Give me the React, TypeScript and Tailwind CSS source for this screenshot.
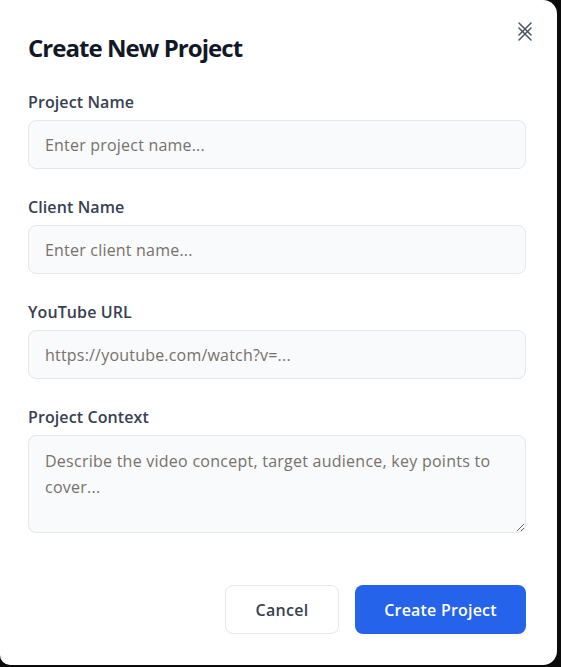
import React from 'react';

const fields = [
  { label: 'Project Name', placeholder: 'Enter project name...' },
  { label: 'Client Name', placeholder: 'Enter client name...' },
  { label: 'YouTube URL', placeholder: 'https://youtube.com/watch?v=...' },
];

const CloseIcon = () => (
  <svg width="16" height="22" viewBox="0 0 16 22" fill="none" stroke="#4b5563" strokeWidth="1.5" strokeLinecap="round">
    <path d="M2 2 L14 14 M14 2 L2 14" />
    <path d="M2 7 L14 19 M14 7 L2 19" />
  </svg>
);

export default function App() {
  return (
    <div
      className="w-[561px] h-[667px] bg-[#0b0b0b] overflow-hidden"
      style={{ fontFamily: '"Open Sans", "Noto Sans", sans-serif' }}
    >
      <div className="relative w-[557px] h-[665px] bg-white rounded-r-[14px] rounded-bl-[10px] pl-7 pr-[31px] pt-8">
        <button className="absolute top-[21px] right-[24px]">
          <CloseIcon />
        </button>
        <h2 className="text-2xl font-bold leading-8 text-[#111827] mb-6 tracking-[-0.95px]">Create New Project</h2>
        <div className="flex flex-col gap-6">
          {fields.map((f) => (
            <div key={f.label}>
              <label className="block text-base leading-7 font-semibold text-[#374151] mb-1 tracking-[0.1px]">{f.label}</label>
              <input
                className="block w-full h-[49px] rounded-lg border border-[#e5e7eb] bg-[#f9fafb] px-4 text-base text-[#111827] placeholder:text-[#78716c] outline-none tracking-[0.2px]"
                placeholder={f.placeholder}
              />
            </div>
          ))}
          <div>
            <label className="block text-base leading-7 font-semibold text-[#374151] mb-1 tracking-[0.1px]">Project Context</label>
            <textarea
              className="block w-full h-[98px] rounded-lg border border-[#e5e7eb] bg-[#f9fafb] px-4 py-3 text-base leading-[26px] text-[#111827] placeholder:text-[#78716c] outline-none tracking-[0.25px]"
              placeholder="Describe the video concept, target audience, key points to cover..."
            />
          </div>
        </div>
        <div className="flex justify-end gap-4 mt-[52px]">
          <button className="w-[114px] h-[49px] rounded-lg border border-[#e5e7eb] bg-white text-base font-semibold text-[#374151] tracking-[0.3px]">
            Cancel
          </button>
          <button className="w-[171px] h-[49px] rounded-lg bg-[#2563eb] text-base font-semibold text-white tracking-[0.2px]">
            Create Project
          </button>
        </div>
      </div>
    </div>
  );
}
